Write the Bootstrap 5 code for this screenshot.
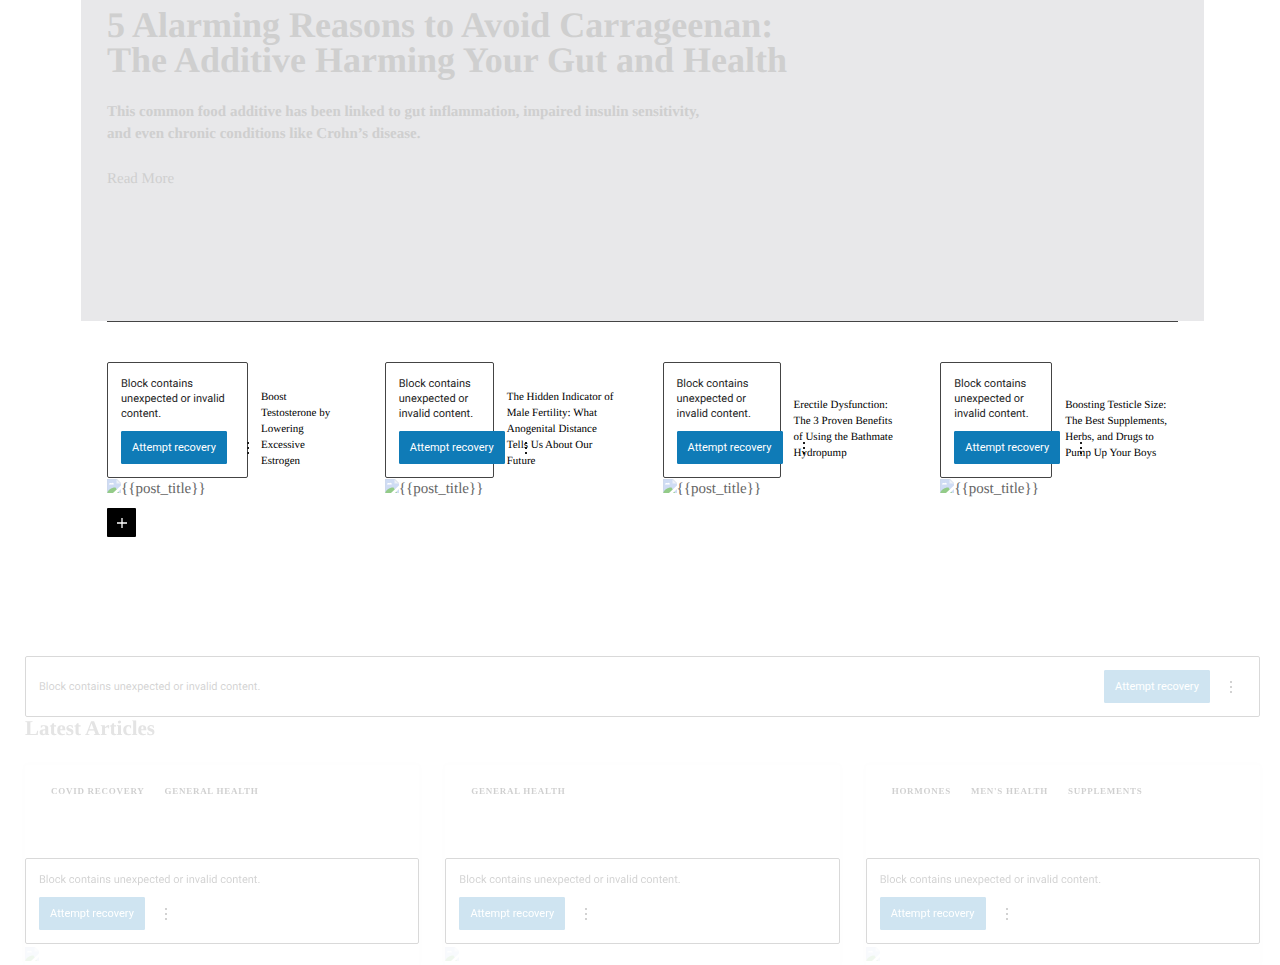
<!DOCTYPE html>
<html lang="en">
<head>
<meta charset="utf-8">
<meta name="viewport" content="width=device-width, initial-scale=1">
<title>5 Alarming Reasons to Avoid Carrageenan</title>
<link href="https://cdn.jsdelivr.net/npm/bootstrap@5.3.0/dist/css/bootstrap.min.css" rel="stylesheet">
<style>
  body { font-family: "Liberation Serif", serif; font-size: 15px; line-height: 22px; color: #000; background: #fff; text-rendering: geometricPrecision; }
  .editor { padding: 0 20px 0 25px; }
  .wide { margin: 0 56px; }
  .faded { opacity: .2; }
  .hero { background: #e8e8ea; color: #cfcfcf; padding: 8px 26px 131px; }
  .hero h1 { font-size: 36px; line-height: 35px; font-weight: 700; margin-bottom: 23px; }
  .hero p { font-weight: 700; margin-bottom: 23px; }
  .hero a { color: inherit; text-decoration: none; }
  .featured { margin: 0 26px; border-top: 1px solid #444; padding-top: 40px; }
  .featured-grid { display: grid; grid-template-columns: repeat(4, 1fr); gap: 40px; }
  .story { gap: 13px; }
  .story h2 { font-size: 11px; line-height: 16px; font-weight: 400; margin: 0; padding-top: 17px; white-space: nowrap; }
  .warning { font-family: Roboto, Inter, sans-serif; font-size: 11px; line-height: 15px; color: #1e1e1e; background: #fff; border: 1px solid #444; border-radius: 2px; padding: 13px; }
  .warning p { margin: 0; }
  .stacked { display: flex; flex-direction: column; gap: 10px; }
  .w-a { width: 141px; } .w-b { width: 109px; } .w-c { width: 118px; } .w-d { width: 112px; }
  .recover { --bs-btn-bg: #0f7bb7; --bs-btn-color: #fff; --bs-btn-border-color: #0f7bb7; --bs-btn-hover-bg: #0a6496; --bs-btn-hover-color: #fff; font: 11px/15px Roboto, Inter, sans-serif; border-radius: 1px; width: 106px; height: 33px; padding: 0; flex: none; white-space: nowrap; }
  .more { border: 0; background: none; padding: 0; width: 30px; height: 33px; margin-left: 6px; flex: none; display: flex; align-items: center; justify-content: center; color: #1e1e1e; }
  .missing { color: #666; height: 22px; }
  .missing svg { display: block; margin-top: 1px; }
  .inserter { background: #000; color: #fff; border: 0; border-radius: 1px; width: 29px; height: 29px; padding: 0; margin-top: 8px; display: flex; align-items: center; justify-content: center; }
  .latest { margin-top: 119px; }
  .latest .warning { border-color: #444; }
  .latest h2 { font-size: 21px; line-height: 22px; font-weight: 700; margin: 0 0 26px; color: #777; }
  .articles { display: grid; grid-template-columns: repeat(3, 1fr); gap: 26px; }
  .article { box-shadow: 0 0 4px 2px rgba(0, 0, 0, .05); border-radius: 3px; }
  .topics { gap: 20px; height: 93px; padding: 18px 26px 0; margin: 0; list-style: none; font-size: 9px; line-height: 16px; font-weight: 700; letter-spacing: .08em; }
  .topics a { color: #111; text-decoration: none; }
  .article .missing { opacity: .7; padding-top: 2px; }
</style>
</head>
<body>
<svg class="d-none" xmlns="http://www.w3.org/2000/svg">
  <symbol id="broken" viewBox="0 0 14 14">
    <path d="M0 0h9.500L14 4.500V14H0z" fill="#cfdcf4"/>
    <path d="M2 5.500c0-1.500 1.500-2 2.300-1.200C5.500 3 7 4 6.800 5.500z" fill="#fff"/>
    <path d="M0 14c1-3 4-5.500 8.500-5.500L12 14z" fill="#93cb88"/>
    <path d="M6 14 14 6.500V10l-4 4z" fill="#fff"/>
    <path d="M9.500 0v4.500H14z" fill="#eef2f8"/>
    <path d="M0 14V0h9.500L14 4.500" fill="none" stroke="#cdd4de" stroke-width=".6"/>
  </symbol>
  <symbol id="dots" viewBox="0 0 4 14"><path d="M1 1h2v2H1zM1 6h2v2H1zM1 11h2v2H1z" fill="currentColor"/></symbol>
</svg>

<main class="editor">
  <div class="wide">
    <header class="hero">
      <h1>5 Alarming Reasons to Avoid Carrageenan:<br>The Additive Harming Your Gut and Health</h1>
      <p>This common food additive has been linked to gut inflammation, impaired insulin sensitivity,<br>and even chronic conditions like Crohn’s disease.</p>
      <a href="#">Read More</a>
    </header>

    <section class="featured">
      <div class="featured-grid">
        <article>
          <div class="story d-flex align-items-center">
            <div class="warning stacked w-a flex-shrink-0">
              <p>Block contains unexpected or invalid content.</p>
              <div class="d-flex"><button class="btn recover" type="button">Attempt recovery</button><button class="more" type="button" aria-label="More options"><svg width="4" height="14"><use href="#dots"/></svg></button></div>
            </div>
            <h2>Boost<br>Testosterone by<br>Lowering<br>Excessive<br>Estrogen</h2>
          </div>
          <div class="missing d-flex"><svg width="14" height="14"><use href="#broken"/></svg><span>{{post_title}}</span></div>
        </article>
        <article>
          <div class="story d-flex align-items-center">
            <div class="warning stacked w-b flex-shrink-0">
              <p>Block contains unexpected or<br>invalid content.</p>
              <div class="d-flex"><button class="btn recover" type="button">Attempt recovery</button><button class="more" type="button" aria-label="More options"><svg width="4" height="14"><use href="#dots"/></svg></button></div>
            </div>
            <h2>The Hidden Indicator of<br>Male Fertility: What<br>Anogenital Distance<br>Tells Us About Our<br>Future</h2>
          </div>
          <div class="missing d-flex"><svg width="14" height="14"><use href="#broken"/></svg><span>{{post_title}}</span></div>
        </article>
        <article>
          <div class="story d-flex align-items-center">
            <div class="warning stacked w-c flex-shrink-0">
              <p>Block contains unexpected or<br>invalid content.</p>
              <div class="d-flex"><button class="btn recover" type="button">Attempt recovery</button><button class="more" type="button" aria-label="More options"><svg width="4" height="14"><use href="#dots"/></svg></button></div>
            </div>
            <h2>Erectile Dysfunction:<br>The 3 Proven Benefits<br>of Using the Bathmate<br>Hydropump</h2>
          </div>
          <div class="missing d-flex"><svg width="14" height="14"><use href="#broken"/></svg><span>{{post_title}}</span></div>
        </article>
        <article>
          <div class="story d-flex align-items-center">
            <div class="warning stacked w-d flex-shrink-0">
              <p>Block contains unexpected or<br>invalid content.</p>
              <div class="d-flex"><button class="btn recover" type="button">Attempt recovery</button><button class="more" type="button" aria-label="More options"><svg width="4" height="14"><use href="#dots"/></svg></button></div>
            </div>
            <h2>Boosting Testicle Size:<br>The Best Supplements,<br>Herbs, and Drugs to<br>Pump Up Your Boys</h2>
          </div>
          <div class="missing d-flex"><svg width="14" height="14"><use href="#broken"/></svg><span>{{post_title}}</span></div>
        </article>
      </div>
      <button class="inserter" type="button" aria-label="Add block"><svg width="12" height="12" viewBox="0 0 12 12" fill="none" stroke="#fff" stroke-width="1.300"><path d="M6 1v10M1 6h10"/></svg></button>
    </section>
  </div>

  <section class="latest faded">
    <div class="warning d-flex align-items-center">
      <p class="me-auto">Block contains unexpected or invalid content.</p>
      <button class="btn recover" type="button">Attempt recovery</button><button class="more" type="button" aria-label="More options"><svg width="4" height="14"><use href="#dots"/></svg></button>
    </div>
    <h2>Latest Articles</h2>
    <div class="articles">
      <article class="article">
        <ul class="topics d-flex"><li><a href="#">COVID RECOVERY</a></li><li><a href="#">GENERAL HEALTH</a></li></ul>
        <div class="warning stacked">
          <p>Block contains unexpected or invalid content.</p>
          <div class="d-flex"><button class="btn recover" type="button">Attempt recovery</button><button class="more" type="button" aria-label="More options"><svg width="4" height="14"><use href="#dots"/></svg></button></div>
        </div>
        <div class="missing"><svg width="14" height="14"><use href="#broken"/></svg></div>
      </article>
      <article class="article">
        <ul class="topics d-flex"><li><a href="#">GENERAL HEALTH</a></li></ul>
        <div class="warning stacked">
          <p>Block contains unexpected or invalid content.</p>
          <div class="d-flex"><button class="btn recover" type="button">Attempt recovery</button><button class="more" type="button" aria-label="More options"><svg width="4" height="14"><use href="#dots"/></svg></button></div>
        </div>
        <div class="missing"><svg width="14" height="14"><use href="#broken"/></svg></div>
      </article>
      <article class="article">
        <ul class="topics d-flex"><li><a href="#">HORMONES</a></li><li><a href="#">MEN'S HEALTH</a></li><li><a href="#">SUPPLEMENTS</a></li></ul>
        <div class="warning stacked">
          <p>Block contains unexpected or invalid content.</p>
          <div class="d-flex"><button class="btn recover" type="button">Attempt recovery</button><button class="more" type="button" aria-label="More options"><svg width="4" height="14"><use href="#dots"/></svg></button></div>
        </div>
        <div class="missing"><svg width="14" height="14"><use href="#broken"/></svg></div>
      </article>
    </div>
  </section>
</main>
<script src="https://cdn.jsdelivr.net/npm/bootstrap@5.3.0/dist/js/bootstrap.bundle.min.js"></script>
</body>
</html>
